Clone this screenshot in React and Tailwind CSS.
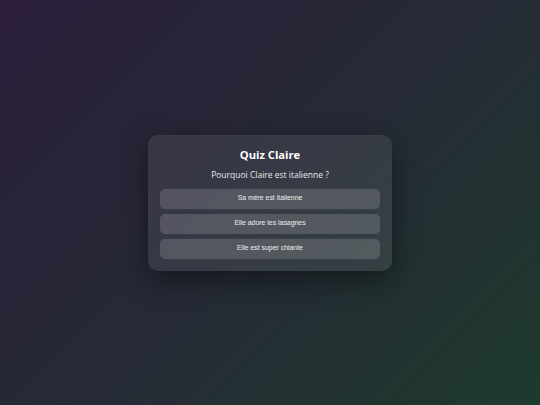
export default function App() {
  const answers = ["Sa mère est italienne", "Elle adore les lasagnes", "Elle est super chiante"];
  return (
    <div className="w-[540px] h-[405px] flex items-center justify-center bg-[linear-gradient(135deg,#2b1e3a_0%,#262a36_50%,#1e3a2d_100%)]">
      <div className="w-[244px] rounded-[10px] bg-white/[0.08] shadow-[0_10px_30px_rgba(0,0,0,0.45)] px-3 pt-3 pb-3 flex flex-col items-center" style={{ fontFamily: '"Open Sans", sans-serif' }}>
        <h1 className="text-[11.2px] font-bold text-white leading-[16px]">Quiz Claire</h1>
        <p className="mt-[6px] text-[8.5px] text-gray-200 leading-[12px]">Pourquoi Claire est italienne ?</p>
        <div className="mt-[8px] w-full flex flex-col gap-[5px]">
          {answers.map((a) => (
            <button key={a} className="w-full h-[20px] rounded-[5px] bg-white/[0.15] text-[6.9px] text-white/90" style={{ fontFamily: '"Liberation Sans", Arial, sans-serif' }}>
              {a}
            </button>
          ))}
        </div>
      </div>
    </div>
  );
}
